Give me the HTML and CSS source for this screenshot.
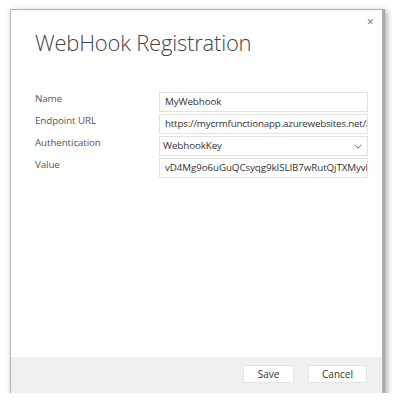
FILE: index.html
```html
<!DOCTYPE html>
<html>
<head>
<meta charset="utf-8">
<link rel="stylesheet" href="styles.css">
</head>
<body>
<div class="dialog">
  <div class="main">
    <div class="close">&#x2715;</div>
    <h1 class="title">WebHook Registration</h1>
    <div class="form">
      <div class="row">
        <div class="label">Name</div>
        <div class="field">MyWebhook</div>
      </div>
      <div class="row">
        <div class="label">Endpoint URL</div>
        <div class="field url">https://mycrmfunctionapp.azurewebsites.net/a</div>
      </div>
      <div class="row">
        <div class="label">Authentication</div>
        <div class="field select"><span>WebhookKey</span>
          <svg class="chev" width="8" height="5" viewBox="0 0 8 5"><path d="M0.5 0.7 L4 4.2 L7.5 0.7" fill="none" stroke="#666" stroke-width="1"/></svg>
        </div>
      </div>
      <div class="row">
        <div class="label">Value</div>
        <div class="field">vD4Mg9o6uGuQCsyqg9kISLIB7wRutQjTXMyvl</div>
      </div>
    </div>
  </div>
  <div class="footer">
    <div class="btn save">Save</div>
    <div class="btn cancel">Cancel</div>
  </div>
</div>
</body>
</html>
```
FILE: styles.css
```css
html, body {
  margin: 0;
  padding: 0;
  background: #fff;
}
body {
  padding: 10px 0 0 11px;
  font-family: "Open Sans", "Noto Sans", sans-serif;
}
.dialog {
  width: 371px;
  height: 383px;
  box-sizing: border-box;
  background: #fff;
  display: flex;
  flex-direction: column;
  box-shadow: 0 0 0 1px #b4b4b4, 1px 1px 0 2px #a8a8a8, 3px 3px 6px 2px rgba(0,0,0,0.35);
}
.main {
  flex: 1;
  position: relative;
  padding: 0 14px 0 24px;
}
.close {
  position: absolute;
  top: 7px;
  right: 8px;
  font-size: 9px;
  color: #777;
  font-family: "DejaVu Sans", sans-serif;
}
.title {
  margin: 0;
  padding-top: 17px;
  font-weight: 300;
  font-size: 22px;
  line-height: 30px;
  color: #444;
  letter-spacing: -0.2px;
}
.form {
  margin-top: 35px;
  display: flex;
  flex-direction: column;
  gap: 2px;
}
.row {
  display: flex;
  height: 20px;
}
.label {
  width: 124px;
  font-size: 9.8px;
  letter-spacing: -0.1px;
  color: #555;
  line-height: 14px;
}
.field {
  flex: 1;
  box-sizing: border-box;
  border: 1px solid #e2e2e2;
  height: 20px;
  font-size: 9.8px;
  letter-spacing: -0.1px;
  color: #333;
  line-height: 18px;
  padding: 0 0 0 5px;
  white-space: nowrap;
  overflow: hidden;
}
.url {
  letter-spacing: -0.2px;
}
.select {
  display: flex;
  justify-content: space-between;
  align-items: center;
  padding-left: 3px;
  padding-right: 5px;
}
.chev {
  display: block;
}
.footer {
  height: 36px;
  background: #f0f0f0;
  display: flex;
  justify-content: flex-end;
  align-items: flex-start;
  gap: 14px;
  padding: 8px 15px 0 0;
  box-sizing: border-box;
}
.btn {
  height: 18px;
  box-sizing: border-box;
  background: #fff;
  border: 1px solid #e4e4e4;
  font-size: 10px;
  color: #333;
  line-height: 16px;
  text-align: center;
}
.save { width: 51px; }
.cancel { width: 59px; }
```
